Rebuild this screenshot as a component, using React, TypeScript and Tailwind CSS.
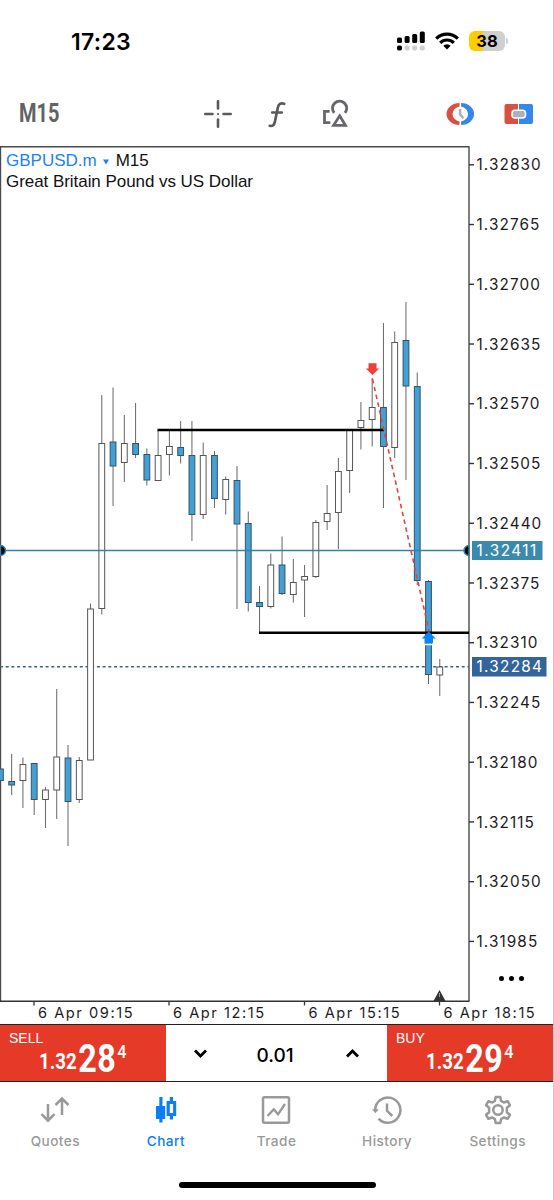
import React from 'react';

type Candle = [high: number, top: number, bottom: number, low: number, down: 0 | 1];

const CANDLES: Candle[] = [
    [769, 769, 780.5, 780.5, 1],
    [754, 781.5, 785, 795, 1],
    [757.5, 764.5, 780.5, 808, 0],
    [763.5, 763.5, 799.5, 815, 1],
    [787, 790, 799.5, 828, 0],
    [689, 757, 790, 819, 0],
    [745, 758, 801.5, 846, 1],
    [757, 760.5, 799.5, 803, 0],
    [603.5, 609, 760, 760, 0],
    [395, 443.5, 608.5, 614.5, 0],
    [387.5, 442, 466, 506, 1],
    [415, 443.5, 462.5, 482, 0],
    [403, 443.5, 454.5, 458, 1],
    [448.5, 454.5, 480, 485.5, 1],
    [430, 455.5, 480.5, 480.5, 0],
    [431, 446.5, 454.5, 475.5, 0],
    [421, 447.5, 455.5, 463.5, 1],
    [421, 455.5, 514.5, 541, 1],
    [442.5, 455.5, 514.5, 519, 0],
    [451, 455.5, 498.5, 508, 1],
    [476.5, 479.5, 499.5, 514.5, 0],
    [466, 480.5, 524, 609, 1],
    [511.5, 523.5, 602.5, 611.5, 1],
    [586, 602.5, 606.5, 632, 1],
    [553.5, 565, 606.5, 608.5, 0],
    [536.5, 565, 593.5, 595, 1],
    [559, 582.5, 594.5, 602.5, 0],
    [565, 576.5, 580, 617, 0],
    [520, 522.5, 576.5, 578, 0],
    [485, 513.5, 521.5, 530, 0],
    [458, 471.5, 512.5, 549, 0],
    [430, 430.5, 470.5, 493, 0],
    [402, 420.5, 427.5, 449.5, 0],
    [378, 407.5, 419.5, 446.5, 0],
    [323, 407.5, 446.5, 508, 1],
    [331.5, 342.5, 447.5, 458, 0],
    [302, 340.5, 386, 480, 1],
    [372.5, 386.5, 580.5, 585, 1],
    [580, 581.5, 674.5, 684, 1],
    [659, 667, 675, 696, 0],
];

const PRICES = [
    '1.32830', '1.32765', '1.32700', '1.32635', '1.32570', '1.32505', '1.32440',
    '1.32375', '1.32310', '1.32245', '1.32180', '1.32115', '1.32050', '1.31985',
];

const TIMES = [
    { x: 34, label: '6 Apr 09:15' },
    { x: 169, label: '6 Apr 12:15' },
    { x: 304.5, label: '6 Apr 15:15' },
    { x: 439.5, label: '6 Apr 18:15' },
];

const StatusBar = () => (
    <div className="h-[82px] shrink-0 flex items-center justify-between pl-[71px] pr-[46px]">
        <span className="font-['Inter'] font-semibold text-[23px] leading-none tracking-[0.3px] pt-[2px]">17:23</span>
        <div className="flex items-center">
            <svg width="28" height="20" viewBox="0 0 28 20">
                <rect x="0" y="6.5" width="5" height="5.5" rx="1.5" />
                <rect x="7.6" y="5" width="5" height="7" rx="1.5" />
                <rect x="15.2" y="3" width="5" height="9" rx="1.5" />
                <rect x="22.8" y="0.5" width="5" height="11.5" rx="1.5" />
                <rect x="0" y="14.5" width="5" height="5" rx="1.7" />
                <rect x="7.6" y="14.5" width="5" height="5" rx="1.7" fill="#cfcfcf" />
                <rect x="15.2" y="14.5" width="5" height="5" rx="1.7" fill="#cfcfcf" />
                <rect x="22.8" y="14.5" width="5" height="5" rx="1.7" fill="#cfcfcf" />
            </svg>
            <svg className="ml-[10px]" width="24" height="18" viewBox="0 0 24 18">
                <path d="M1.2 6.6a15.3 15.3 0 0 1 21.6 0" fill="none" stroke="#000" strokeWidth="3.3" />
                <path d="M5.2 10.8a9.7 9.7 0 0 1 13.6 0" fill="none" stroke="#000" strokeWidth="3.2" />
                <path d="M8.3 13.7a5.3 5.3 0 0 1 7.4 0L12 17.6z" />
            </svg>
            <div className="ml-[10px] w-[36px] h-[20px] rounded-[6px] flex items-center justify-center bg-[linear-gradient(90deg,#ffcc00_38%,#cfcfcf_38%)]">
                <span className="font-['Inter'] font-bold text-[16.5px] leading-none">38</span>
            </div>
            <div className="ml-px w-[2px] h-[6px] rounded-r-full bg-[#cfcfcf]" />
        </div>
    </div>
);

const Toolbar = () => (
    <div className="h-[64px] shrink-0 flex items-center pl-[19px] pr-[20px]">
        <div className="w-[184px] pt-px">
            <span className="inline-block origin-left scale-x-[0.8] font-['Roboto'] font-bold text-[25px] leading-none text-[#626366]">M15</span>
        </div>
        <svg width="30" height="30" viewBox="203 99 30 30" stroke="#58595b" strokeWidth="2.6" strokeLinecap="round">
            <path d="M218 101.3v7.2M218 119.5v7.2M205.3 114h7.2M223.5 114h7.2" />
            <path d="M218 114h.01" strokeWidth="2.2" />
        </svg>
        <svg className="ml-[30px]" width="30" height="30" viewBox="263 99 30 30" fill="none" stroke="#58595b" strokeWidth="2.7" strokeLinecap="round">
            <path d="M284.2 103.8c-3.6-1.2-5.6.2-6.4 3.9l-2.9 14c-.7 3.3-2.2 4.9-5.2 4.1M272.2 112.5h9.6" />
        </svg>
        <svg className="ml-[28px]" width="30" height="30" viewBox="321 99 30 30" fill="none" stroke="#66676a" strokeWidth="2.8">
            <path d="M329.6 111.3h-5.1v11.3h5.8" />
            <path d="M334.2 112.9a7.1 7.1 0 1 1 10.8 0" />
            <path d="M339.7 115.8l5.7 9.5h-11.8z" />
        </svg>
        <svg className="ml-auto" width="30" height="26" viewBox="445.5 101 30 26">
            <path d="M460 103a13 11 0 0 0 0 22v-3.5a9 7.7 0 0 1 0-15z" fill="#da4f43" />
            <path d="M461.6 103a13 11 0 0 1 0 22v-3.5a9 7.7 0 0 0 0-15z" fill="#3487eb" />
            <path d="M460.6 109v5.3l3.2 4" fill="none" stroke="#aab2bd" strokeWidth="2.6" />
        </svg>
        <svg className="ml-[29px]" width="30" height="26" viewBox="504 101 30 26">
            <path d="M518 104h-11.5a2 2 0 0 0-2 2v16a2 2 0 0 0 2 2H518z" fill="#da4f43" />
            <path d="M519 104h12a2 2 0 0 1 2 2v16a2 2 0 0 1-2 2h-12z" fill="#3487eb" />
            <rect x="512" y="110.3" width="13.5" height="7.8" rx="3" fill="#aab2bd" stroke="#fff" strokeWidth="1.5" />
        </svg>
    </div>
);

const PriceChart = () => (
    <svg width="554" height="878" viewBox="0 146 554 878" className="block">
        {/* frame */}
        <path d="M0.5 1001V146.7H469V1001" fill="none" stroke="#4a4a4a" strokeWidth="1.4" />
        <path d="M0 1001.3H469.6" stroke="#333" strokeWidth="1.4" />

        {/* current price */}
        <path d="M0 666.8H469" stroke="#42617a" strokeWidth="1.5" strokeDasharray="3 2.7" />

        {CANDLES.map(([high, top, bottom, low, down], i) => {
            const x = 0.4 + i * 11.266;
            return (
                <g key={i} stroke={down ? '#33546b' : '#555'}>
                    <path d={`M${x} ${high}V${low}`} stroke="#666" />
                    <rect x={x - 2.9} y={top} width="5.8" height={bottom - top} fill={down ? '#449fd3' : '#fff'} />
                </g>
            );
        })}

        <path d="M0 550.5H469" stroke="#3382a6" strokeWidth="1.4" />
        <path d="M0.5 545.5a5 5 0 0 1 0 10z M469 545.5a5 5 0 0 0 0 10z" stroke="#3382a6" strokeWidth="1.4" />
        <path d="M157.5 430H384M259 632.8H469" stroke="#000" strokeWidth="2.5" />

        {/* closed trade */}
        <path d="M372.5 379L429 631" stroke="#e8413a" strokeWidth="1.6" strokeDasharray="4.5 3.5" />
        <path d="M368.5 363.3h8v5.2h2.7l-6.7 6.5-6.7-6.5h2.7z" fill="#ee4036" />
        <path d="M424.5 643.5h8.5v-5h2.7l-7-7-7 7h2.8z" fill="#0a84ff" />
        <path d="M425 644.5h8" stroke="#fff" strokeWidth="1.5" />

        {/* price axis */}
        <g fontFamily="Inter, sans-serif" fontSize="15.3" letterSpacing="1.1" fill="#1c1c1e">
            {PRICES.map((price, i) => (
                <g key={price}>
                    <path d={`M469 ${164.8 + i * 59.74}h5`} stroke="#333" strokeWidth="1.4" />
                    <text x="476.5" y={170.4 + i * 59.74}>{price}</text>
                </g>
            ))}
        </g>
        <rect x="472" y="541" width="70.5" height="19" fill="#3c89ae" />
        <rect x="472" y="657" width="74.5" height="19.5" fill="#33659b" />
        <g fontFamily="Inter, sans-serif" fontSize="15.3" fill="#fff">
            <text x="476.5" y="556.2" letterSpacing="1.5">1.32411</text>
            <text x="476.5" y="672.3" letterSpacing="1.3">1.32284</text>
        </g>

        {/* time axis */}
        <g fontFamily="Inter, sans-serif" fontSize="14.6" letterSpacing="1.55" fill="#1c1c1e">
            {TIMES.map(({ x, label }) => (
                <g key={label}>
                    <path d={`M${x} 1001v4.5`} stroke="#333" strokeWidth="1.3" />
                    <text x={x + 4} y="1018.3">{label}</text>
                </g>
            ))}
        </g>
        <path d="M433.5 1001l6-11 6 11z" fill="#333" />
        <path d="M439.5 993v4" stroke="#999" />
    </svg>
);

const ChartPanel = () => (
    <div className="relative h-[878px] shrink-0">
        <PriceChart />
        <div className="absolute left-[6px] top-[4px] font-['Liberation_Sans'] text-[17px] leading-[21px] text-[#111] whitespace-nowrap">
            <div className="flex items-center">
                <span className="text-[#1a82f7]">GBPUSD.m</span>
                <svg className="ml-[6px] mr-[7px] mt-[2px]" width="6" height="6" viewBox="0 0 7 6">
                    <path d="M0 0h7L3.5 6z" fill="#1a82f7" />
                </svg>
                <span>M15</span>
            </div>
            <div className="tracking-[-0.05px]">Great Britain Pound vs US Dollar</div>
        </div>
        <button aria-label="More" className="absolute left-[499px] top-[830px] flex gap-[5px]">
            <span className="w-[5px] h-[5px] rounded-full bg-black" />
            <span className="w-[5px] h-[5px] rounded-full bg-black" />
            <span className="w-[5px] h-[5px] rounded-full bg-black" />
        </button>
    </div>
);

interface QuoteProps {
    side: string;
    base: string;
    pips: string;
    point: string;
}

const Quote = ({ side, base, pips, point }: QuoteProps) => (
    <div className="bg-[#e63a29] text-white">
        <div className="font-['Liberation_Sans'] text-[14px] leading-[14px] pl-[9px] pt-[6px]">{side}</div>
        <div className="ml-[39px] flex items-end origin-left scale-x-[0.85] font-['Roboto'] font-bold leading-none">
            <span className="text-[22px] leading-[22px]">{base}</span>
            <span className="text-[38px] leading-[28px] ml-[2px] tracking-[0.6px]">{pips}</span>
            <span className="text-[19px] leading-[16px] self-start ml-px -mt-px font-medium">{point}</span>
        </div>
    </div>
);

const TradeBar = () => (
    <div className="h-[58px] shrink-0 grid grid-cols-[166px_221px_167px] border-y border-[#222]">
        <Quote side="SELL" base="1.32" pips="28" point="4" />
        <div className="flex items-center justify-between px-[28px]">
            <svg width="13" height="9" viewBox="0 0 13 9" fill="none" stroke="#000" strokeWidth="2.8">
                <path d="M1 1.5L6.5 7 12 1.5" />
            </svg>
            <span className="font-['Inter'] font-medium text-[19px] leading-none pt-[4px] -ml-[3px]">0.01</span>
            <svg width="13" height="9" viewBox="0 0 13 9" fill="none" stroke="#000" strokeWidth="2.8">
                <path d="M1 7.5L6.5 2 12 7.5" />
            </svg>
        </div>
        <Quote side="BUY" base="1.32" pips="29" point="4" />
    </div>
);

const QuotesIcon = () => (
    <svg width="30" height="30" viewBox="0 0 30 30" fill="none" stroke="currentColor" strokeWidth="2.5">
        <path d="M8 9v17M1.5 19.2L8 25.7l6.5-6.5" />
        <path d="M22 20V3.5M15.5 10L22 3.5l6.5 6.5" />
    </svg>
);

const ChartIcon = () => (
    <svg width="30" height="30" viewBox="0 0 30 30" fill="currentColor">
        <path d="M8.3 2h3.2v9h2.7v13h-2.7v3.5H8.3V24H5V11h3.3z" />
        <path d="M18.8 2H22v4h3.2v15H22v3.5h-3.2V21h-3.2V6h3.2zM18.8 9v9h3.3V9z" fillRule="evenodd" />
    </svg>
);

const TradeIcon = () => (
    <svg width="30" height="30" viewBox="0 0 30 30" fill="none" stroke="currentColor" strokeWidth="2.5">
        <rect x="2" y="2.2" width="26" height="25.5" rx="1.5" />
        <path d="M6.5 21l6.3-6.7 4.2 5L24 9" strokeWidth="2.4" />
    </svg>
);

const HistoryIcon = () => (
    <svg width="30" height="30" viewBox="0 0 30 30" fill="none" stroke="currentColor" strokeWidth="2.5">
        <path d="M3.2 15.5A12.6 12.6 0 1 1 6.5 23.6" />
        <path d="M0 14.3h6.8L3.4 18.3z" fill="currentColor" stroke="none" />
        <path d="M15 8.5v7.3l5.3 5.2" />
    </svg>
);

const SettingsIcon = () => (
    <svg width="30" height="30" viewBox="0 0 30 30" fill="none" stroke="currentColor" strokeWidth="2.5" strokeLinejoin="round">
        <path d="M12.7 2h4.6l.8 3.9 2.7 1.6 3.8-1.3 2.3 4-3 2.6v4.4l3 2.6-2.3 4-3.8-1.3-2.7 1.6-.8 3.9h-4.6l-.8-3.9-2.7-1.6-3.8 1.3-2.3-4 3-2.6v-4.4l-3-2.6 2.3-4 3.8 1.3 2.7-1.6z" />
        <circle cx="15" cy="15" r="4.7" />
    </svg>
);

const TABS = [
    { label: 'Quotes', icon: <QuotesIcon /> },
    { label: 'Chart', icon: <ChartIcon />, active: true },
    { label: 'Trade', icon: <TradeIcon /> },
    { label: 'History', icon: <HistoryIcon /> },
    { label: 'Settings', icon: <SettingsIcon /> },
];

const TabBar = () => (
    <div className="flex-1 flex flex-col justify-between pb-[12px]">
        <div className="w-[553px] grid grid-cols-5 pt-[13px]">
            {TABS.map(({ label, icon, active }) => (
                <div key={label} className={`flex flex-col items-center ${active ? 'text-[#0a7ff5]' : 'text-[#999]'}`}>
                    {icon}
                    <span className="mt-[8px] font-['Inter'] font-medium text-[13.6px] leading-[16px] tracking-[0.45px]">{label}</span>
                </div>
            ))}
        </div>
        <div className="w-[197px] h-[6px] rounded-full bg-black self-center" />
    </div>
);

export default function App() {
    return (
        <div className="relative w-[554px] h-[1200px] bg-white flex flex-col overflow-hidden">
            <StatusBar />
            <Toolbar />
            <ChartPanel />
            <TradeBar />
            <TabBar />
            <div className="absolute right-0 top-0 w-px h-full bg-[#c9c9c9]" />
        </div>
    );
}
